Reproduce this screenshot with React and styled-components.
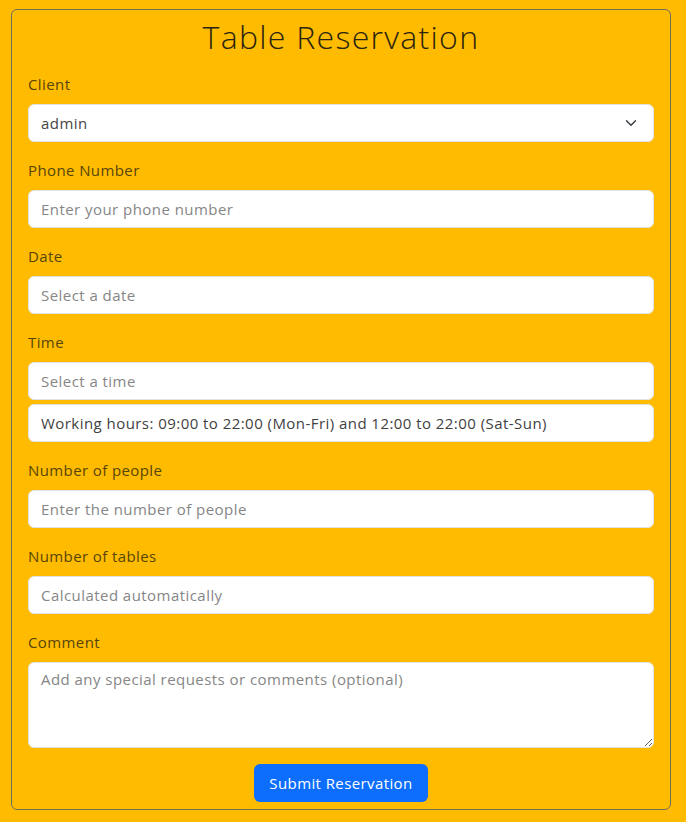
import React from "react";
import styled, { createGlobalStyle } from "styled-components";

const GlobalStyle = createGlobalStyle`
  html, body {
    margin: 0;
    padding: 0;
    background: #ffbb00;
  }
  body {
    font-family: "Open Sans", "Liberation Sans", Arial, sans-serif;
    color: #212529;
  }
  * {
    box-sizing: border-box;
  }
`;

const fields = [
  { label: "Phone Number", placeholder: "Enter your phone number" },
  { label: "Date", placeholder: "Select a date" },
];

const App = () => {
  return (
    <>
      <GlobalStyle />
      <Page>
        <Card>
          <Title>Table Reservation</Title>

          <Group>
            <Label>Client</Label>
            <SelectBox>
              <span>admin</span>
              <svg width="12" height="12" viewBox="0 0 16 16" fill="none">
                <path
                  d="M2 5l6 6 6-6"
                  stroke="#343a40"
                  strokeWidth="1.8"
                  strokeLinecap="round"
                  strokeLinejoin="round"
                />
              </svg>
            </SelectBox>
          </Group>

          {fields.map((f) => (
            <Group key={f.label}>
              <Label>{f.label}</Label>
              <Input placeholder={f.placeholder} />
            </Group>
          ))}

          <Group>
            <Label>Time</Label>
            <Input placeholder="Select a time" />
            <Hint>
              Working hours: 09:00 to 22:00 (Mon-Fri) and 12:00 to 22:00
              (Sat-Sun)
            </Hint>
          </Group>

          <Group>
            <Label>Number of people</Label>
            <Input placeholder="Enter the number of people" />
          </Group>

          <Group>
            <Label>Number of tables</Label>
            <Input placeholder="Calculated automatically" />
          </Group>

          <Group>
            <Label>Comment</Label>
            <TextArea placeholder="Add any special requests or comments (optional)" />
          </Group>

          <ButtonRow>
            <SubmitButton type="button">Submit Reservation</SubmitButton>
          </ButtonRow>
        </Card>
      </Page>
    </>
  );
};

const Page = styled.div`
  padding: 9px 15px 11px 11px;
`;

const Card = styled.div`
  border: 1px solid #6c6f5a;
  border-radius: 6px;
  padding: 10px 16px 7px;
  display: flex;
  flex-direction: column;
`;

const Title = styled.h2`
  margin: 0 0 18px;
  text-align: center;
  font-size: 32px;
  font-weight: 300;
  line-height: 34px;
  letter-spacing: 1.3px;
  color: #2b2410;
`;

const Group = styled.div`
  display: flex;
  flex-direction: column;
  gap: 4px;
  margin-bottom: 16px;
`;

const Label = styled.label`
  font-size: 15px;
  line-height: 24px;
  margin-bottom: 4px;
  letter-spacing: 0.4px;
  color: #574509;
`;

const fieldBase = `
  width: 100%;
  height: 38px;
  padding: 6px 12px;
  font-family: "Open Sans", "Liberation Sans", Arial, sans-serif;
  font-size: 15px;
  letter-spacing: 0.45px;
  background: #ffffff;
  border: 1px solid #e3e3e3;
  border-radius: 6px;
  color: #3a3a3a;
  outline: none;
`;

const Input = styled.input`
  ${fieldBase}
  &::placeholder {
    color: #868686;
  }
`;

const SelectBox = styled.div`
  ${fieldBase}
  display: flex;
  align-items: center;
  justify-content: space-between;
  padding-right: 16px;
  color: #444;
`;

const Hint = styled.div`
  ${fieldBase}
  display: flex;
  align-items: center;
  color: #3f3f3f;
`;

const TextArea = styled.textarea`
  ${fieldBase}
  height: 86px;
  resize: vertical;
  &::placeholder {
    color: #868686;
  }
`;

const ButtonRow = styled.div`
  display: flex;
  justify-content: center;
`;

const SubmitButton = styled.button`
  height: 38px;
  padding: 0 15px;
  border: none;
  border-radius: 6px;
  background: #0d6efd;
  color: #ffffff;
  font-family: "Open Sans", "Liberation Sans", Arial, sans-serif;
  font-size: 15px;
  letter-spacing: 0.4px;
  cursor: pointer;
`;

export default App;
